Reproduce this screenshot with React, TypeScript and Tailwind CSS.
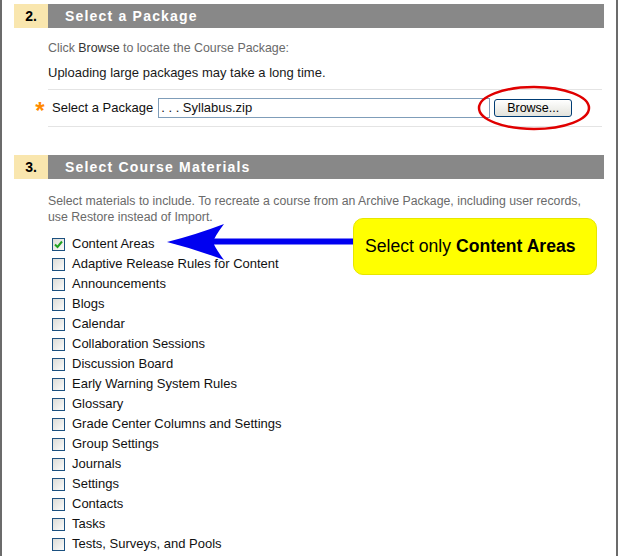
import React from 'react';

const materials = [
  'Content Areas',
  'Adaptive Release Rules for Content',
  'Announcements',
  'Blogs',
  'Calendar',
  'Collaboration Sessions',
  'Discussion Board',
  'Early Warning System Rules',
  'Glossary',
  'Grade Center Columns and Settings',
  'Group Settings',
  'Journals',
  'Settings',
  'Contacts',
  'Tasks',
  'Tests, Surveys, and Pools',
];

const SectionHeader: React.FC<{ num: string; title: string }> = ({ num, title }) => (
  <div className="mx-[12px] flex h-[24px]">
    <div className="flex w-[34px] items-center justify-center bg-[#f9e6ae] text-[14px] font-bold text-black">
      {num}
    </div>
    <div className="flex flex-1 items-center bg-[#888888] pl-[17px] text-[14px] font-bold tracking-[1.2px] text-white">
      {title}
    </div>
  </div>
);

const Checkbox: React.FC<{ checked?: boolean }> = ({ checked }) => (
  <span className="flex h-[13px] w-[13px] items-center justify-center border border-[#1c5180] bg-gradient-to-br from-[#dcdcd7] to-[#fbfbfa]">
    {checked && (
      <svg width="9" height="9" viewBox="0 0 9 9">
        <path d="M1 4.5 L3.5 7 L8 1.5" fill="none" stroke="#21a121" strokeWidth="2" />
      </svg>
    )}
  </span>
);

const App: React.FC = () => {
  return (
    <div
      className="relative h-[556px] w-[618px] overflow-hidden border-x-2 border-[#6b6b6b] bg-white"
      style={{ fontFamily: '"Liberation Sans", Arial, sans-serif' }}
    >
      {/* Section 2 */}
      <div className="pt-[4px]">
        <SectionHeader num="2." title="Select a Package" />
        <div className="pl-[46px] pr-[14px]">
          <p className="mt-[12px] text-[12.4px] leading-[16px] text-[#6a6a6a]">
            Click <span className="text-[#333]">Browse</span> to locate the Course Package:
          </p>
          <p className="mt-[9px] text-[13px] leading-[16px] text-[#1a1a1a]">
            Uploading large packages may take a long time.
          </p>
          <div className="mt-[8px] border-t border-[#e4e4e4]" />
          <div className="relative -ml-[16px] flex h-[36px] items-center">
            <span className="-ml-[2px] w-[20px] pt-[6px] text-center text-[24px] font-bold leading-none text-[#ff8a00]">*</span>
            <span className="ml-[2px] text-[13px] text-[#111]">Select a Package</span>
            <div className="ml-[5px] flex h-[20px] w-[332px] items-center border border-[#7f9db9] px-[2px] text-[13px] text-[#111]">
              . . . Syllabus.zip
            </div>
            <button className="ml-[4px] h-[18px] w-[78px] rounded-[3px] border border-[#003c74] bg-gradient-to-b from-white to-[#e3e3dc] text-[12.5px] leading-none text-black">
              Browse...
            </button>
          </div>
          <div className="border-t border-[#e4e4e4]" />
        </div>
      </div>

      {/* Section 3 */}
      <div className="pt-[28px]">
        <SectionHeader num="3." title="Select Course Materials" />
        <div className="pl-[46px] pr-[14px]">
          <p className="mt-[14px] text-[12.3px] leading-[16px] text-[#6a6a6a]">
            Select materials to include. To recreate a course from an Archive Package, including user records,
            <br />
            use Restore instead of Import.
          </p>
          <ul className="mt-[9px]">
            {materials.map((m, i) => (
              <li key={m} className="flex h-[20px] items-center pl-[4px]">
                <Checkbox checked={i === 0} />
                <span className="ml-[7px] text-[13px] text-[#111]">{m}</span>
              </li>
            ))}
          </ul>
        </div>
      </div>

      {/* Red circle around Browse */}
      <svg className="pointer-events-none absolute left-[474px] top-[85px]" width="116" height="48" viewBox="0 0 116 48">
        <ellipse cx="58" cy="23" rx="55" ry="21" fill="none" stroke="#e00000" strokeWidth="2.5" />
      </svg>

      {/* Arrow */}
      <svg className="pointer-events-none absolute left-[163px] top-[223px]" width="192" height="40" viewBox="0 0 192 40">
        <rect x="44" y="15.5" width="148" height="6" fill="#0000f0" />
        <path d="M2 19 Q30 12 59 1 Q47 17 49 19 Q47 21 59 37 Q30 26 2 19 Z" fill="#0000f0" />
      </svg>

      {/* Callout */}
      <div className="absolute left-[351px] top-[218px] flex h-[57px] w-[244px] items-center rounded-[10px] border border-[#e6e600] bg-[#ffff00] pl-[11px] text-[17.6px] text-black">
        Select only&nbsp;<b>Content Areas</b>
      </div>
    </div>
  );
};

export default App;
